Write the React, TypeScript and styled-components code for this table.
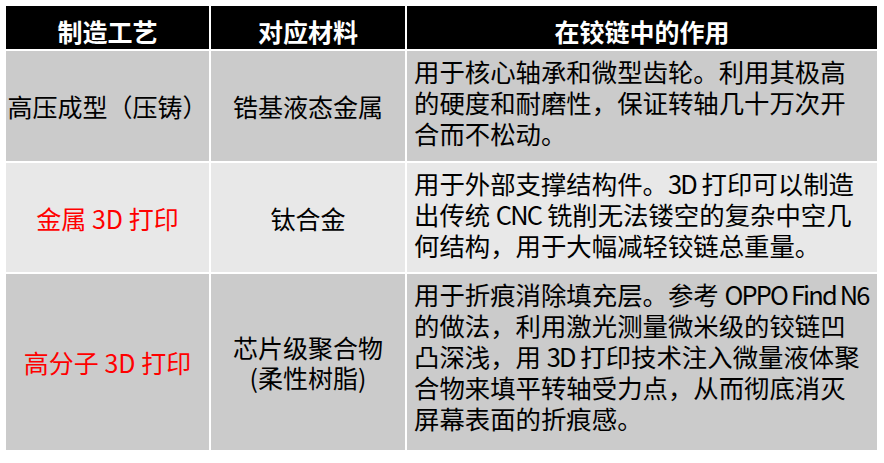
import React from 'react';
import styled, { createGlobalStyle } from 'styled-components';

const GlobalStyle = createGlobalStyle`
  html, body {
    margin: 0;
    padding: 0;
    background: #ffffff;
  }
  body {
    font-family: "Noto Sans CJK SC", "Noto Sans", sans-serif;
  }
`;

const Page = styled.div`
  width: 884px;
  height: 463px;
  padding: 6px 0 0 6px;
  box-sizing: border-box;
  background: #ffffff;
`;

const Grid = styled.div`
  display: grid;
  grid-template-columns: 203px 194px 470px;
  grid-template-rows: 43px 110px 109px 176px;
  gap: 2px;
  width: 871px;
  background: #ffffff;
`;

const HeadCell = styled.div`
  display: flex;
  align-items: center;
  justify-content: center;
  padding-top: 6px;
  box-sizing: border-box;
  background: #000000;
  color: #ffffff;
  font-size: 25px;
  font-weight: 700;
  line-height: 30px;
  white-space: nowrap;
`;

type ShadeProps = {
  $light: boolean;
};

const Cell = styled.div<ShadeProps>`
  display: flex;
  align-items: center;
  justify-content: center;
  text-align: center;
  background: ${props => (props.$light ? '#e8e8e8' : '#cbcbcb')};
  color: #000000;
  font-size: 25px;
  line-height: 30px;
  white-space: nowrap;
`;

const Label = styled.span<{ $red?: boolean }>`
  color: ${props => (props.$red ? '#ff0000' : '#000000')};
`;

const DescCell = styled.div<ShadeProps>`
  padding: 5px 0 0 7px;
  box-sizing: border-box;
  background: ${props => (props.$light ? '#e8e8e8' : '#cbcbcb')};
  color: #000000;
  font-size: 25.4px;
  line-height: 31px;
  white-space: nowrap;
`;

// latin words in the reference are set tighter than the CJK font's latin
const Latin = styled.span`
  letter-spacing: -1.8px;
`;

type Row = {
  process: string;
  red: boolean;
  material: string[];
  usage: string[];
};

const rows: Row[] = [
  {
    process: '高压成型（压铸）',
    red: false,
    material: ['锆基液态金属'],
    usage: [
      '用于核心轴承和微型齿轮。利用其极高',
      '的硬度和耐磨性，保证转轴几十万次开',
      '合而不松动。',
    ],
  },
  {
    process: '金属 3D 打印',
    red: true,
    material: ['钛合金'],
    usage: [
      '用于外部支撑结构件。3D 打印可以制造',
      '出传统 CNC 铣削无法镂空的复杂中空几',
      '何结构，用于大幅减轻铰链总重量。',
    ],
  },
  {
    process: '高分子 3D 打印',
    red: true,
    material: ['芯片级聚合物', '(柔性树脂)'],
    usage: [
      '用于折痕消除填充层。参考 OPPO Find N6',
      '的做法，利用激光测量微米级的铰链凹',
      '凸深浅，用 3D 打印技术注入微量液体聚',
      '合物来填平转轴受力点，从而彻底消灭',
      '屏幕表面的折痕感。',
    ],
  },
];

const withLatin = (line: string) =>
  line.split(/([A-Za-z0-9][A-Za-z0-9 ]*[A-Za-z0-9])/).map((part, i) =>
    i % 2 === 1 ? <Latin key={i}>{part}</Latin> : part
  );

const lines = (items: string[], latin = false) =>
  items.map((line, i) => (
    <React.Fragment key={i}>
      {i > 0 && <br />}
      {latin ? withLatin(line) : line}
    </React.Fragment>
  ));

const App = (): JSX.Element => (
  <>
    <GlobalStyle />
    <Page>
      <Grid>
        <HeadCell>制造工艺</HeadCell>
        <HeadCell>对应材料</HeadCell>
        <HeadCell>在铰链中的作用</HeadCell>
        {rows.map((row, i) => {
          const light = i % 2 === 1;
          return (
            <React.Fragment key={row.process}>
              <Cell $light={light}>
                <Label $red={row.red}>{row.process}</Label>
              </Cell>
              <Cell $light={light}>
                <div>{lines(row.material)}</div>
              </Cell>
              <DescCell $light={light}>{lines(row.usage, true)}</DescCell>
            </React.Fragment>
          );
        })}
      </Grid>
    </Page>
  </>
);

export default App;
